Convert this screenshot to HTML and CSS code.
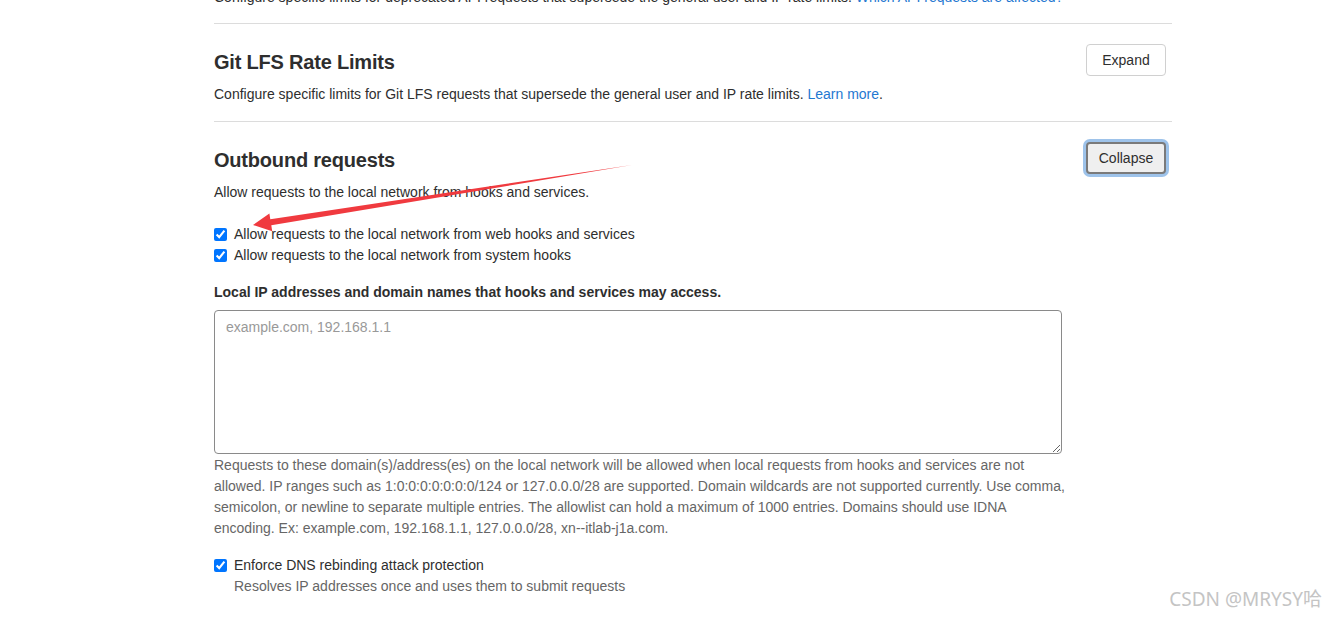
FILE: index.html
```html
<!DOCTYPE html>
<html lang="en">
<head>
    <meta charset="UTF-8">
    <meta name="viewport" content="width=device-width, initial-scale=1.0">
    <title>Network settings</title>
    <link rel="stylesheet" href="styles.css">
</head>
<body>

<div class="settings">
    <p class="cut-text">Configure specific limits for deprecated API requests that supersede the general user and IP rate limits. <a href="#">Which API requests are affected?</a></p>

    <section class="settings-section">
        <div class="section-head">
            <div class="section-title">
                <h4>Git LFS Rate Limits</h4>
                <p>Configure specific limits for Git LFS requests that supersede the general user and IP rate limits. <a href="#">Learn more</a>.</p>
            </div>
            <button class="btn">Expand</button>
        </div>
    </section>

    <section class="settings-section">
        <div class="section-head">
            <div class="section-title">
                <h4>Outbound requests</h4>
                <p>Allow requests to the local network from hooks and services.</p>
            </div>
            <button class="btn btn-focus">Collapse</button>
        </div>

        <div class="section-body">
            <label class="check-row"><input type="checkbox" checked> Allow requests to the local network from web hooks and services</label>
            <label class="check-row"><input type="checkbox" checked> Allow requests to the local network from system hooks</label>

            <label class="field-label" for="allowlist">Local IP addresses and domain names that hooks and services may access.</label>
            <textarea id="allowlist" class="allowlist" placeholder="example.com, 192.168.1.1"></textarea>
            <p class="help-text">Requests to these domain(s)/address(es) on the local network will be allowed when local requests from hooks and services are not allowed. IP ranges such as 1:0:0:0:0:0:0:0/124 or 127.0.0.0/28 are supported. Domain wildcards are not supported currently. Use comma, semicolon, or newline to separate multiple entries. The allowlist can hold a maximum of 1000 entries. Domains should use IDNA<br>encoding. Ex: example.com, 192.168.1.1, 127.0.0.0/28, xn--itlab-j1a.com.</p>

            <label class="check-row dns-row"><input type="checkbox" checked> Enforce DNS rebinding attack protection</label>
            <p class="check-help">Resolves IP addresses once and uses them to submit requests</p>
        </div>
    </section>
</div>

<!-- annotation arrow drawn over the screenshot -->
<svg class="arrow" width="1337" height="617" viewBox="0 0 1337 617">
    <polygon points="632,165 270.3,219.3 269.4,213.4 253,225 272.2,231.2 271.3,225.3" fill="#f03a3f"/>
</svg>

<div class="watermark">CSDN @MRYSY哈</div>

</body>
</html>
```

FILE: styles.css
```css
* {
    box-sizing: border-box;
}

html, body {
    margin: 0;
    padding: 0;
    height: 100%;
    overflow: hidden;
    background: #fff;
    color: #2e2e2e;
    font-family: "Liberation Sans", Arial, sans-serif;
    font-size: 14px;
}

a {
    color: #1f78d1;
    text-decoration: none;
}

.settings {
    width: 958px;
    margin-left: 214px;
    margin-top: -13px;
}

.cut-text {
    margin: 0;
    line-height: 20px;
    padding-bottom: 16px;
}

.settings-section {
    border-top: 1px solid #dcdcdc;
    padding-top: 20px;
    padding-bottom: 17px;
}

.section-head {
    display: flex;
    justify-content: space-between;
    align-items: flex-start;
}

.section-title h4 {
    margin: 6px 0 0;
    font-size: 20px;
    line-height: 24px;
    font-weight: 600;
    letter-spacing: -0.2px;
}

.section-title p {
    margin: 10px 0 0;
    line-height: 20px;
}

.btn {
    width: 80px;
    height: 32px;
    margin-right: 6px;
    background: #fff;
    border: 1px solid #d0d0d0;
    border-radius: 4px;
    color: #2e2e2e;
    font-family: inherit;
    font-size: 14px;
}

.btn-focus {
    background: #efefef;
    border: 2px solid #7a7a7a;
    box-shadow: 0 0 0 3px #9ec3ea;
}

.section-body {
    padding-top: 22px;
}

.check-row {
    display: flex;
    align-items: center;
    line-height: 21px;
}

.check-row input {
    width: 13px;
    height: 13px;
    margin: 0 7px 0 0;
    accent-color: #0075ff;
}

.field-label {
    display: block;
    margin-top: 16px;
    font-weight: bold;
    line-height: 20px;
}

.allowlist {
    display: block;
    width: 848px;
    height: 144px;
    margin-top: 8px;
    padding: 6px 11px;
    border: 1px solid #8a8a8a;
    border-radius: 4px;
    font-family: inherit;
    font-size: 14px;
    line-height: 20px;
    resize: vertical;
}

.allowlist::placeholder {
    color: #999;
}

.help-text {
    width: 860px;
    margin: 0;
    padding-top: 1px;
    color: #666;
    line-height: 21px;
}

.dns-row {
    margin-top: 16px;
}

.check-help {
    margin: 0 0 0 20px;
    color: #666;
    line-height: 21px;
}

.arrow {
    position: absolute;
    top: 0;
    left: 0;
    pointer-events: none;
}

.watermark {
    position: absolute;
    right: 15px;
    bottom: 5px;
    color: #c4c4c4;
    font-family: "Noto Sans", "Noto Sans CJK SC", sans-serif;
    font-size: 19px;
}
```
